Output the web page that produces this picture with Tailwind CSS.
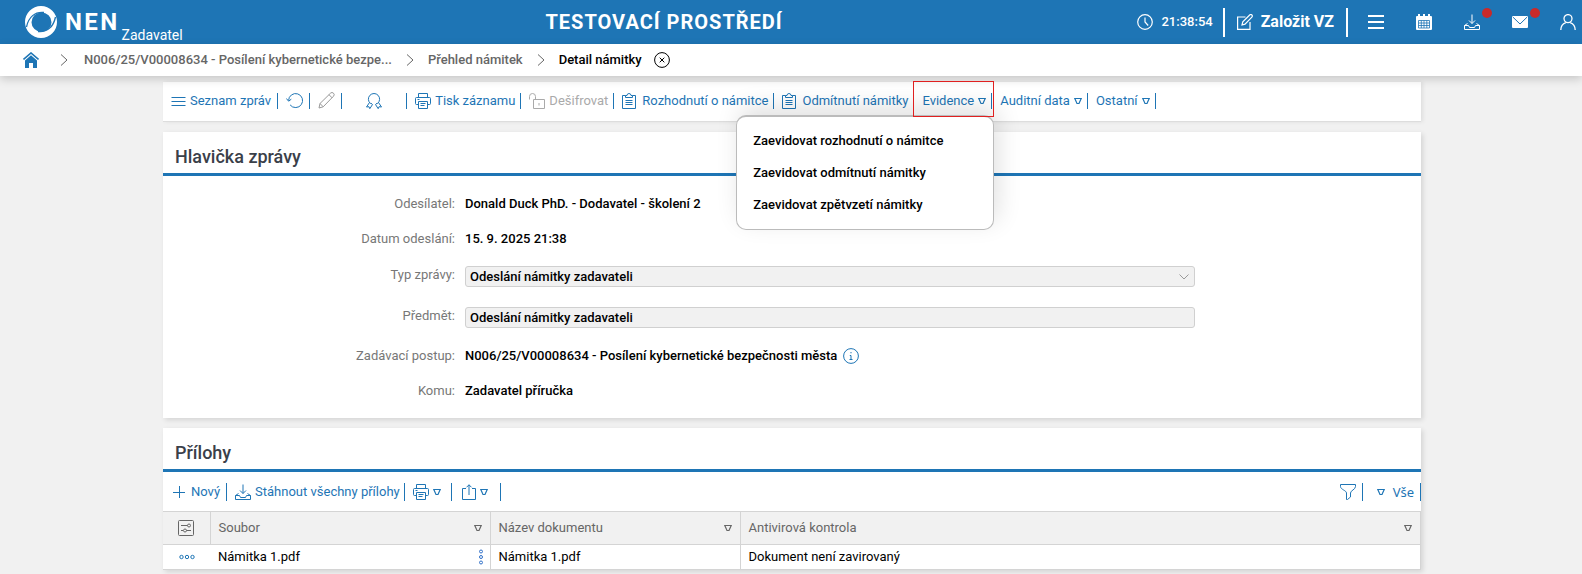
<!DOCTYPE html>
<html lang="cs">
<head>
    <meta charset="UTF-8">
    <meta name="viewport" content="width=device-width, initial-scale=1.0">
    <title>NEN - Detail námitky</title>
    <script src="https://cdn.jsdelivr.net/npm/@tailwindcss/browser@4"></script>
</head>
<body class="min-h-screen bg-[#f1f1f1] font-[Roboto,sans-serif] text-[13px] leading-5 text-black">
    <!-- Icons -->
    <svg class="hidden" xmlns="http://www.w3.org/2000/svg">
        <symbol id="i-tri" viewBox="0 0 8 8"><path d="M.8 1.500h6.400L5 6.500H3z" fill="none" stroke="currentColor" stroke-width="1.200"/></symbol>
        <symbol id="i-chevron" viewBox="0 0 8 12"><path d="M1 .5 7 6l-6 5.500" fill="none" stroke="currentColor"/></symbol>
        <symbol id="i-print" viewBox="0 0 16 16"><path d="M3.500 4.500v-4h9v4M3.500 11.500h-2a1 1 0 0 1-1-1v-5a1 1 0 0 1 1-1h13a1 1 0 0 1 1 1v5a1 1 0 0 1-1 1h-2M3.500 8.500h9v7h-9zM5.500 10.500h5M5.500 12.500h4M2.500 6.500h2" fill="none" stroke="currentColor"/></symbol>
        <symbol id="i-clip" viewBox="0 0 14 16"><path d="M3.500 2.500h-3v13h13v-13h-3M3.500 4.500v-2H5a2 2 0 0 1 4 0h1.500v2zM3.500 7.500h7M3.500 9.500h7M3.500 11.500h7" fill="none" stroke="currentColor"/></symbol>
        <symbol id="i-download" viewBox="0 0 16 16"><path d="M8 .5v9M5 6.500l3 3 3-3M3.500 9.500l-3 2v4h15v-4l-3-2M.5 11.500h4l1 2h5l1-2h4" fill="none" stroke="currentColor"/></symbol>
    </svg>

    <header class="flex h-11 items-center justify-between bg-[#1e75b5] pl-[25px] pr-1.5 text-white">
        <div class="flex h-full items-center pr-2">
            <svg class="size-8" viewBox="0 0 32 32"><path fill="currentColor" fill-rule="evenodd" d="M16 0a16 16 0 1 1 0 32 16 16 0 0 1 0-32zm.5 6.500a10 9.700 0 1 0 0 19.400 10 9.700 0 0 0 0-19.400z"/><path d="M1.500 21C3.500 11 10 5.500 19 6.500M30.500 11C28.500 21 22 26.500 13 25.500" fill="none" stroke="#1e75b5" stroke-width="1.300"/></svg>
            <span class="ml-2 text-2xl font-bold tracking-widest">NEN</span>
            <span class="ml-0.5 self-end text-sm leading-[18px]">Zadavatel</span>
        </div>
        <h1 class="text-xl font-bold tracking-wider">TESTOVACÍ PROSTŘEDÍ</h1>
        <div class="flex items-center">
            <svg class="size-4" viewBox="0 0 16 16" fill="none" stroke="currentColor" stroke-width="1.200"><circle cx="8" cy="8" r="7.300"/><path d="M8 3.500V8l3.200 3.500"/></svg>
            <span class="ml-2 font-medium">21:38:54</span>
            <span class="ml-2.5 h-[29px] w-0.5 bg-white"></span>
            <button class="flex items-center gap-2 px-3 text-base font-bold">
                <svg class="size-4" viewBox="0 0 16 16" fill="none" stroke="currentColor" stroke-width="1.200"><path d="M8.500 3H.6v12.400H13V8"/><path d="m5 11 .8-3.200L12.700 1a1.500 1.500 0 0 1 2.200 2.200L8 10.200z"/></svg>
                Založit VZ
            </button>
            <span class="mr-5 h-[29px] w-0.5 bg-white"></span>
            <div class="flex gap-8">
                <button aria-label="Menu"><svg class="size-4" viewBox="0 0 16 16" stroke="currentColor" stroke-width="2"><path d="M0 2h16M0 8h16M0 14h16"/></svg></button>
                <button aria-label="Kalendář"><svg class="size-4" viewBox="0 0 16 16"><path fill="currentColor" d="M1 2h1V0h2v2h3V0h2v2h3V0h2v2h1a1 1 0 0 1 1 1v12a1 1 0 0 1-1 1H1a1 1 0 0 1-1-1V3a1 1 0 0 1 1-1z"/><path d="M2.500 6.500h11v7.500h-11zM2.500 9h11M2.500 11.500h11M5.300 6.500V14M8 6.500V14M10.800 6.500V14" fill="none" stroke="#1e75b5" stroke-width=".8"/></svg></button>
                <button aria-label="Stažené soubory" class="relative"><svg class="size-4"><use href="#i-download"/></svg><span class="absolute -top-1.5 left-[18px] size-2.5 rounded-full bg-[#c92a2a]"></span></button>
                <button aria-label="Zprávy" class="relative"><svg class="size-4" viewBox="0 0 16 16"><rect y="2" width="16" height="12" rx="1" fill="currentColor"/><path d="m.8 3 7.200 7 7.200-7" fill="none" stroke="#1e75b5"/></svg><span class="absolute -top-1.5 left-[18px] size-2.5 rounded-full bg-[#c92a2a]"></span></button>
                <button aria-label="Profil"><svg class="size-4" viewBox="0 0 16 16" fill="none" stroke="currentColor" stroke-width="1.300"><circle cx="8" cy="4.600" r="4"/><path d="M.8 16c0-4 2.500-6.500 5-7.400M15.200 16c0-4-2.500-6.500-5-7.400"/></svg></button>
            </div>
        </div>
    </header>

    <nav class="relative flex h-8 items-center bg-white pl-[23px] font-medium text-[#666] shadow-[0_3px_10px_rgba(0,0,0,0.18)]">
        <a href="#" aria-label="Domů" class="text-[#1e75b5]"><svg class="size-4" viewBox="0 0 16 16"><path d="M.5 7.500 8 1l7.500 6.500" fill="none" stroke="currentColor" stroke-width="1.600"/><path fill="currentColor" d="M2 8.500 8 3.300l6 5.200V16h-4v-5H6v5H2z"/></svg></a>
        <svg class="mr-4 ml-[21px] h-3 w-2"><use href="#i-chevron"/></svg>
        <a href="#">N006/25/V00008634 - Posílení kybernetické bezpe...</a>
        <svg class="mx-3.5 h-3 w-2"><use href="#i-chevron"/></svg>
        <a href="#">Přehled námitek</a>
        <svg class="mx-3.5 h-3 w-2"><use href="#i-chevron"/></svg>
        <span class="text-black">Detail námitky</span>
        <button aria-label="Zavřít" class="ml-3 text-black"><svg class="size-4" viewBox="0 0 16 16" fill="none" stroke="currentColor"><circle cx="8" cy="8" r="7.400"/><path d="m5.700 5.700 4.600 4.600M10.300 5.700l-4.600 4.600"/></svg></button>
    </nav>

    <main class="flex flex-col gap-2.5 pt-1.5 pr-[161px] pl-[163px]">
        <div class="flex h-10 items-center border-b border-[#ddd] bg-white pb-0.5 text-[#1e75b5] shadow-[2px_0_4px_rgba(0,0,0,0.08)]">
            <button class="flex h-4 items-center gap-1 border-r border-[#1e75b5] pr-1.5 pl-2"><svg class="h-4 w-[15px]" viewBox="0 0 15 16" stroke="currentColor"><path d="M.5 4.500h14M.5 8.500h14M.5 12.500h14"/></svg>Seznam zpráv</button>
            <button aria-label="Obnovit" class="flex h-4 items-center border-r border-[#1e75b5] pr-1.5 pl-2"><svg class="size-[17px]" viewBox="0 0 17 17" fill="none" stroke="currentColor"><path d="M2.600 8.500a7 7 0 1 1 1.500 4.400M.4 6.500l2.200 2.700 2.700-2"/></svg></button>
            <button aria-label="Upravit" disabled class="flex h-4 items-center border-r border-[#1e75b5] pr-1.5 pl-2"><svg class="size-[17px] text-[#999]" viewBox="0 0 17 17" fill="none" stroke="currentColor"><path d="m1 16 1-4.500L12.500 1.200a2 2 0 0 1 3 3L5.200 14.800zM2 11.500l3.200 3.300M11 2.700l3.200 3.200"/></svg></button>
            <button aria-label="Podpis" class="flex h-4 items-center border-r border-[#1e75b5] px-6"><svg class="size-4" viewBox="0 0 16 16" fill="none" stroke="currentColor"><path d="M4.500 10.500a5.600 5.600 0 1 1 7 0M4.500 10.500l1.500.3M11.500 10.500l-1.500.3M3.500 9.500l-3 4.500 2.500-.3.800 2 2.700-4.200-1-1M12.500 9.500l3 4.500-2.500-.3-.8 2-2.700-4.200 1-1"/></svg></button>
            <button class="flex h-4 items-center gap-1 border-r border-[#1e75b5] pr-[5px] pl-2"><svg class="size-4"><use href="#i-print"/></svg>Tisk záznamu</button>
            <button disabled class="flex h-4 items-center gap-1 border-r border-[#1e75b5] pr-[5px] pl-2"><svg class="size-4 text-[#aaa]" viewBox="0 0 16 16" fill="none" stroke="currentColor"><path d="M4.500 6.500h11v9h-11zM.5 6.500V3.500a3 3 0 0 1 6 0v3M10 10v2.500"/></svg><span class="text-[#aaa]">Dešifrovat</span></button>
            <button class="flex h-4 items-center gap-1.5 border-r border-[#1e75b5] pr-[5px] pl-2"><svg class="h-4 w-3.5"><use href="#i-clip"/></svg>Rozhodnutí o námitce</button>
            <button class="flex h-4 items-center gap-1.5 border-r border-[#1e75b5] pr-[5px] pl-2"><svg class="h-4 w-3.5"><use href="#i-clip"/></svg>Odmítnutí námitky</button>
            <div class="relative">
                <button class="flex h-4 items-center gap-1 border-r border-[#1e75b5] pr-[5px] pl-2">Evidence<svg class="size-2"><use href="#i-tri"/></svg></button>
                <ul class="absolute top-[22px] -right-0.5 z-10 w-[258px] rounded-[10px] border border-t-2 border-[#bbb] bg-white py-2 pl-4 font-medium text-black shadow-[4px_-8px_24px_rgba(0,0,0,0.12)]">
                    <li><a href="#" class="block leading-8">Zaevidovat rozhodnutí o námitce</a></li>
                    <li><a href="#" class="block leading-8">Zaevidovat odmítnutí námitky</a></li>
                    <li><a href="#" class="block leading-8">Zaevidovat zpětvzetí námitky</a></li>
                </ul>
                <span class="pointer-events-none absolute -top-3 -right-0.5 -bottom-2 -left-px z-20 border border-[#e02020]"></span>
            </div>
            <button class="flex h-4 items-center gap-1 border-r border-[#1e75b5] pr-[5px] pl-2">Auditní data<svg class="size-2"><use href="#i-tri"/></svg></button>
            <button class="flex h-4 items-center gap-1 border-r border-[#1e75b5] pr-[5px] pl-2">Ostatní<svg class="size-2"><use href="#i-tri"/></svg></button>
        </div>

        <section class="bg-white shadow-[2px_2px_5px_rgba(0,0,0,0.12)]">
            <h2 class="border-b-3 border-[#1e75b5] px-3 pt-3.5 pb-1.5 text-lg leading-[21px] font-medium text-[#3a4049]">Hlavička zprávy</h2>
            <div class="grid grid-cols-[292px_1fr] gap-x-2.5 pt-2.5 pr-[226px] pb-2.5 font-medium">
                <div class="text-right leading-[35px] font-normal text-[#777]">Odesílatel:</div>
                <div class="leading-[35px]">Donald Duck PhD. - Dodavatel - školení 2</div>
                <div class="text-right leading-[35px] font-normal text-[#777]">Datum odeslání:</div>
                <div class="leading-[35px]">15. 9. 2025 21:38</div>
                <label for="typ" class="text-right leading-[37px] font-normal text-[#777]">Typ zprávy:</label>
                <div class="relative flex h-[41px] items-center">
                    <select id="typ" class="h-[21px] w-full appearance-none rounded-[3px] border border-[#d0d0d0] bg-[#f1f1f1] px-1 leading-[19px]">
                        <option>Odeslání námitky zadavateli</option>
                    </select>
                    <svg class="pointer-events-none absolute right-1.5 size-2.5 text-[#999]" viewBox="0 0 10 10"><path d="m.5 2.500 4.500 4.500 4.500-4.500" fill="none" stroke="currentColor"/></svg>
                </div>
                <label for="predmet" class="text-right leading-[37px] font-normal text-[#777]">Předmět:</label>
                <div class="flex h-[41px] items-center">
                    <input id="predmet" type="text" readonly value="Odeslání námitky zadavateli" class="h-[21px] w-full rounded-[3px] border border-[#d0d0d0] bg-[#f1f1f1] px-1">
                </div>
                <div class="text-right leading-[35px] font-normal text-[#777]">Zadávací postup:</div>
                <div class="flex items-center gap-1.5 leading-[35px]">
                    N006/25/V00008634 - Posílení kybernetické bezpečnosti města
                    <button aria-label="Informace" class="text-[#1e75b5]"><svg class="size-4" viewBox="0 0 16 16" fill="none" stroke="currentColor"><circle cx="8" cy="8" r="7.400"/><path d="M8 4v1.300M6.800 7.500H8v4M6.500 11.500h3"/></svg></button>
                </div>
                <div class="text-right leading-[35px] font-normal text-[#777]">Komu:</div>
                <div class="leading-[35px]">Zadavatel příručka</div>
            </div>
        </section>

        <section class="bg-white shadow-[2px_2px_5px_rgba(0,0,0,0.12)]">
            <h2 class="border-b-3 border-[#1e75b5] px-3 pt-3.5 pb-1.5 text-lg leading-[21px] font-medium text-[#3a4049]">Přílohy</h2>
            <div class="flex h-[39px] items-center text-[#1e75b5]">
                <button class="flex h-[18px] items-center gap-1.5 border-r border-[#1e75b5] pr-1.5 pl-2.5"><svg class="size-3" viewBox="0 0 12 12" stroke="currentColor"><path d="M0 6.500h12M6.500 0v12"/></svg>Nový</button>
                <button class="flex h-[18px] items-center gap-1 border-r border-[#1e75b5] pr-1 pl-2"><svg class="size-4"><use href="#i-download"/></svg>Stáhnout všechny přílohy</button>
                <button aria-label="Tisk" class="flex h-[18px] items-center gap-1 border-r border-[#1e75b5] pr-2.5 pl-2"><svg class="size-4"><use href="#i-print"/></svg><svg class="size-2"><use href="#i-tri"/></svg></button>
                <button aria-label="Export" class="flex h-[18px] items-center gap-1 border-r border-[#1e75b5] pr-3 pl-2.5"><svg class="h-4 w-3.5" viewBox="0 0 14 16" fill="none" stroke="currentColor"><path d="M4 4.500H.5v11h13v-11H10M7 11V.8M4.500 3.300 7 .8l2.500 2.500"/></svg><svg class="size-2"><use href="#i-tri"/></svg></button>
                <button aria-label="Filtr" class="ml-auto flex h-[18px] items-center border-r border-[#1e75b5] pr-1.5"><svg class="size-4" viewBox="0 0 16 16" fill="none" stroke="currentColor"><path d="M.5.5h15v2c0 3-5 4-5 6.500v4l-3 2.500h-1V9c0-2.500-6-3.500-6-6.500z"/></svg></button>
                <button class="flex h-[18px] items-center gap-2 border-r border-[#1e75b5] pr-1.5 pl-3.5 font-['Noto_Sans',sans-serif]"><svg class="size-2"><use href="#i-tri"/></svg>Vše</button>
            </div>
            <table class="w-full table-fixed border-collapse text-left">
                <thead class="text-[#666]">
                    <tr class="h-[33px] border-y border-[#d4d4d4] bg-[#f1f1f1]">
                        <th class="w-[47px] border-r border-[#d4d4d4]">
                            <button aria-label="Nastavení sloupců" class="mx-auto block"><svg class="size-4" viewBox="0 0 16 16" fill="none" stroke="currentColor"><rect x=".5" y=".5" width="15" height="15" rx="1"/><path d="M3 5.500h6.500M3 10.500h2M8.500 10.500H13"/><circle cx="11" cy="5.500" r="1.500"/><circle cx="7" cy="10.500" r="1.500"/></svg></button>
                        </th>
                        <th class="w-[280px] border-r border-[#d4d4d4] px-2 font-normal"><div class="flex items-center justify-between">Soubor<svg class="size-2"><use href="#i-tri"/></svg></div></th>
                        <th class="w-[250px] border-r border-[#d4d4d4] px-2 font-normal"><div class="flex items-center justify-between">Název dokumentu<svg class="size-2"><use href="#i-tri"/></svg></div></th>
                        <th class="border-r border-[#d4d4d4] px-2 font-normal"><div class="flex items-center justify-between">Antivirová kontrola<svg class="size-2"><use href="#i-tri"/></svg></div></th>
                    </tr>
                </thead>
                <tbody>
                    <tr class="h-[25px] border-b border-[#d4d4d4]">
                        <td class="text-[#1e75b5]"><button aria-label="Akce" class="mx-auto block"><svg class="h-1.5 w-4" viewBox="0 0 16 6" fill="none" stroke="currentColor"><circle cx="2.500" cy="3" r="1.700"/><circle cx="8" cy="3" r="1.700"/><circle cx="13.500" cy="3" r="1.700"/></svg></button></td>
                        <td class="border-r border-[#d4d4d4] pr-1.5 pl-2"><div class="flex items-center justify-between">Námitka 1.pdf<button aria-label="Další akce" class="text-[#3070c8]"><svg class="h-4 w-1.5" viewBox="0 0 6 16" fill="none" stroke="currentColor"><circle cx="3" cy="2.500" r="1.500"/><circle cx="3" cy="8" r="1.500"/><circle cx="3" cy="13.500" r="1.500"/></svg></button></div></td>
                        <td class="border-r border-[#d4d4d4] px-2">Námitka 1.pdf</td>
                        <td class="border-r border-[#d4d4d4] px-2">Dokument není zavirovaný</td>
                    </tr>
                </tbody>
            </table>
        </section>
    </main>
</body>
</html>
